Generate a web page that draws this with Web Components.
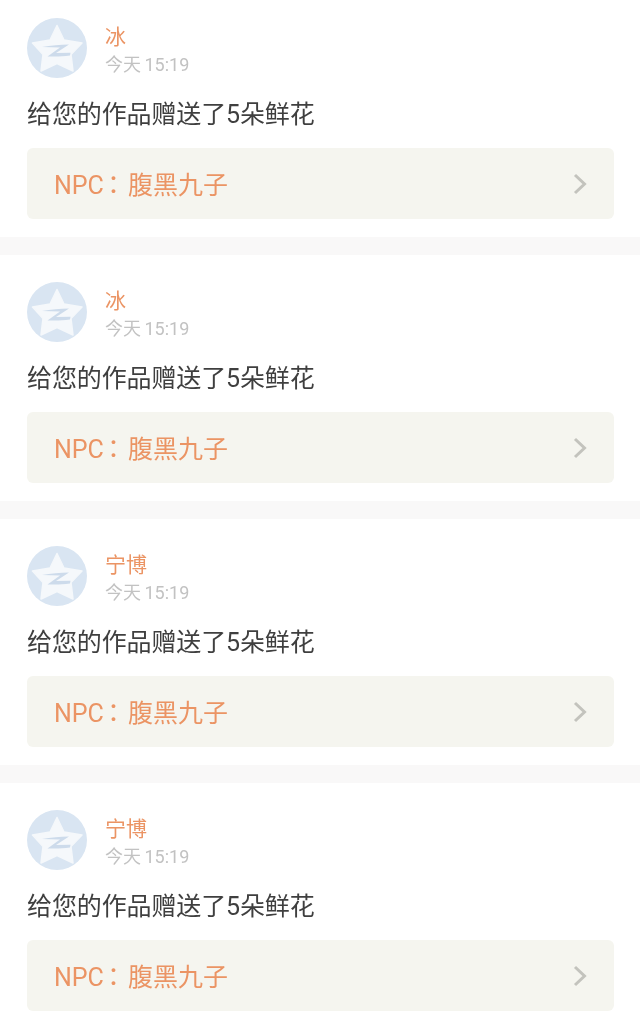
<!DOCTYPE html>
<html><head><meta charset="utf-8">
<style>
html,body{margin:0;padding:0;background:#fff;}
body{width:640px;height:1014px;overflow:hidden;font-family:Roboto,"Noto Sans CJK SC",sans-serif;}
.colon{font-family:"Noto Sans CJK TC",sans-serif;margin-left:-3px;margin-right:2px}
</style></head><body>
<template id="t-avatar"><style>
:host{display:block;width:60px;height:60px;flex:none}
svg{display:block;width:60px;height:60px;filter:blur(.5px)}
</style><svg viewBox="0 0 60 60" aria-hidden="true">
<circle cx="30" cy="30" r="30" fill="#d9e5f2"/>
<path d="M30 7.5 L37 22 L55 25 L44 36.5 L46 53 L30 45.5 L14 53 L16 36.5 L5.5 25 L23 22 Z" fill="#f5f8fb" stroke="#f5f8fb" stroke-width="1.5" stroke-linejoin="round"/>
<path d="M15 29 C24 27.2 33 26.4 42 26.4 L29 35 L43.5 34.8 L43 37.6 C35 38.6 28 38.8 20.5 38.4 L33 29.6 C27 29.2 21 29.2 15 29 Z" fill="#cddbeb"/>
</svg></template>

<template id="t-link"><style>
:host{display:flex;align-items:center;justify-content:space-between;height:71px;box-sizing:border-box;background:#f5f5ef;border-radius:6px;padding:0 27px;color:#eb9464;font-size:25px;margin-top:17px}
.label{display:block;line-height:32px;padding-top:2px;filter:blur(.3px)}
svg{display:block;width:14px;height:22px;margin-top:1px;filter:blur(.3px)}
</style><span class="label"><slot></slot></span><svg viewBox="0 0 14 22" aria-hidden="true"><path d="M2 2 L11.5 11 L2 20" fill="none" stroke="#c3c3bd" stroke-width="3"/></svg></template>

<template id="t-card"><style>
:host{display:block;padding:27px 26px 18px 27px;background:#fff}
:host([first]){padding-top:18px}
.head{display:flex;gap:19px;height:60px}
.meta{display:flex;flex-direction:column;padding-top:5px;margin-left:-1px;filter:blur(.3px)}
.name{font-size:21px;line-height:28px;color:#eb9464}
.time{font-size:18px;line-height:26px;color:#c2c2c2;margin-top:1px;word-spacing:-1px}
.msg{font-size:25px;line-height:32px;color:#3f3f3f;margin-top:21px;letter-spacing:-.005em;white-space:nowrap;filter:blur(.3px)}
</style><div class="head"><x-avatar></x-avatar><div class="meta"><div class="name"><slot name="name"></slot></div><div class="time"><slot name="time"></slot></div></div></div>
<div class="msg"><slot name="msg"></slot></div>
<x-link><slot name="link"></slot></x-link></template>

<template id="t-gap"><style>:host{display:block;height:18px;background:#f9f8f8}</style></template>

<x-card first><span slot="name">冰</span><span slot="time">今天 15:19</span><span slot="msg">给您的作品赠送了5朵鲜花</span><span slot="link">NPC<span class="colon">：</span>腹黑九子</span></x-card>
<x-gap></x-gap>
<x-card><span slot="name">冰</span><span slot="time">今天 15:19</span><span slot="msg">给您的作品赠送了5朵鲜花</span><span slot="link">NPC<span class="colon">：</span>腹黑九子</span></x-card>
<x-gap></x-gap>
<x-card><span slot="name">宁博</span><span slot="time">今天 15:19</span><span slot="msg">给您的作品赠送了5朵鲜花</span><span slot="link">NPC<span class="colon">：</span>腹黑九子</span></x-card>
<x-gap></x-gap>
<x-card><span slot="name">宁博</span><span slot="time">今天 15:19</span><span slot="msg">给您的作品赠送了5朵鲜花</span><span slot="link">NPC<span class="colon">：</span>腹黑九子</span></x-card>

<script>
for (const [tag,id] of [['x-avatar','t-avatar'],['x-link','t-link'],['x-card','t-card'],['x-gap','t-gap']]) {
  customElements.define(tag, class extends HTMLElement {
    constructor(){super();this.attachShadow({mode:'open'}).appendChild(document.getElementById(id).content.cloneNode(true));}
  });
}
</script>
</body></html>
